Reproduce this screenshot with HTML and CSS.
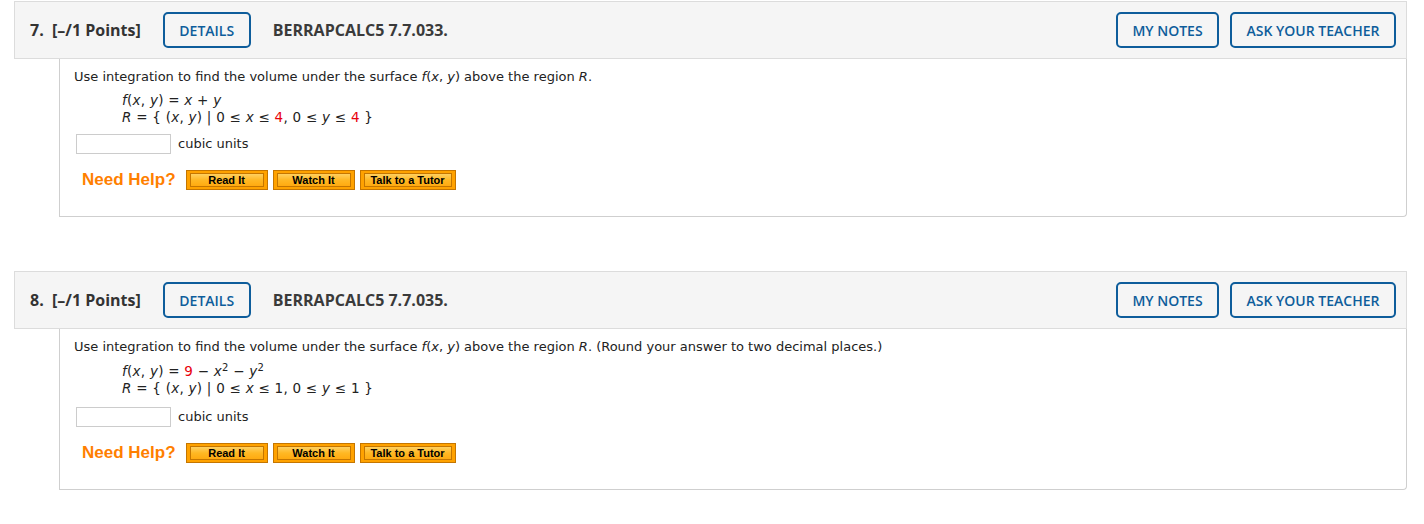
FILE: index.html
```html
<!DOCTYPE html>
<html>
<head>
<meta charset="utf-8">
<link rel="stylesheet" href="styles.css">
</head>
<body>
<div class="page">
  <div class="question">
    <div class="qhead">
      <span class="qnum">7.</span>
      <span class="qpts">[–/1 Points]</span>
      <span class="btn details">DETAILS</span>
      <span class="qid">BERRAPCALC5 7.7.033.</span>
      <span class="spacer"></span>
      <span class="btn notes">MY NOTES</span>
      <span class="btn ask">ASK YOUR TEACHER</span>
    </div>
    <div class="qbody">
      <p class="prompt">Use integration to find the volume under the surface <i>f</i>(<i>x</i>, <i>y</i>) above the region <i>R</i>.</p>
      <div class="eqs">
        <div><i>f</i>(<i>x</i>, <i>y</i>) = <i>x</i> + <i>y</i></div>
        <div><i>R</i> = { (<i>x</i>, <i>y</i>) | 0 ≤ <i>x</i> ≤ <span class="red">4</span>, 0 ≤ <i>y</i> ≤ <span class="red">4</span> }</div>
      </div>
      <div class="answer"><span class="box"></span><span>cubic units</span></div>
      <div class="help">
        <span class="needhelp">Need Help?</span>
        <span class="hbtn w82"><span>Read It</span></span>
        <span class="hbtn w82"><span>Watch It</span></span>
        <span class="hbtn w95"><span>Talk to a Tutor</span></span>
      </div>
    </div>
  </div>
  <div class="question">
    <div class="qhead">
      <span class="qnum">8.</span>
      <span class="qpts">[–/1 Points]</span>
      <span class="btn details">DETAILS</span>
      <span class="qid">BERRAPCALC5 7.7.035.</span>
      <span class="spacer"></span>
      <span class="btn notes">MY NOTES</span>
      <span class="btn ask">ASK YOUR TEACHER</span>
    </div>
    <div class="qbody sup-body">
      <p class="prompt">Use integration to find the volume under the surface <i>f</i>(<i>x</i>, <i>y</i>) above the region <i>R</i>. (Round your answer to two decimal places.)</p>
      <div class="eqs">
        <div class="supline"><i>f</i>(<i>x</i>, <i>y</i>) = <span class="red">9</span> − <i>x</i><sup>2</sup> − <i>y</i><sup>2</sup></div>
        <div><i>R</i> = { (<i>x</i>, <i>y</i>) | 0 ≤ <i>x</i> ≤ 1, 0 ≤ <i>y</i> ≤ 1 }</div>
      </div>
      <div class="answer"><span class="box"></span><span>cubic units</span></div>
      <div class="help">
        <span class="needhelp">Need Help?</span>
        <span class="hbtn w82"><span>Read It</span></span>
        <span class="hbtn w82"><span>Watch It</span></span>
        <span class="hbtn w95"><span>Talk to a Tutor</span></span>
      </div>
    </div>
  </div>
</div>
</body>
</html>
```
FILE: styles.css
```css
html, body { margin: 0; padding: 0; background: #fff; }
.page { padding: 1px 0 0 14px; width: 1393px; }
.question { margin-bottom: 54px; }
.qhead {
  display: flex; align-items: center;
  height: 56px;
  background: #f5f5f5;
  border: 1px solid #dcdcdc;
  font-family: "Open Sans", sans-serif;
  color: #333;
  padding: 0 10px 0 15px;
}
.qnum { font-weight: 700; font-size: 16px; width: 22px; }
.qpts { font-weight: 700; font-size: 16px; margin-right: 22px; }
.btn {
  box-sizing: border-box;
  height: 36px;
  display: inline-flex; align-items: center; justify-content: center;
  border: 2px solid #0e5d9b;
  border-radius: 5px;
  color: #0e5d9b;
  font-weight: 600; font-size: 14px;
  background: #f5f5f5;
}
.details { width: 88px; margin-right: 22px; }
.qid { font-weight: 700; font-size: 16px; color: #3a3a3a; }
.spacer { flex: 1; }
.notes { width: 103px; margin-right: 11px; }
.ask { width: 166px; }
.qbody {
  margin-left: 45px;
  border: 1px solid #cfcfcf;
  border-top: none;
  border-radius: 0 0 4px 0;
  padding: 10px 14px 26px 14px;
  font-family: "DejaVu Sans", Verdana, sans-serif;
  font-size: 13px;
  color: #222;
}
.prompt { margin: 0 0 7px 0; line-height: 16px; }
.eqs { margin-left: 48px; line-height: 17px; font-size: 13.5px; letter-spacing: 0.25px; }
.supline { line-height: 18px; }
.eqs sup { font-size: 10px; line-height: 0; vertical-align: 5px; }
.red { color: #e8000b; }
.answer { display: flex; align-items: center; margin-top: 8px; margin-left: 2px; line-height: 16px; }
.sup-body .answer { margin-top: 10px; }
.box { width: 95px; height: 20px; box-sizing: border-box; border: 1px solid #ccc; margin-right: 7px; }
.help { display: flex; align-items: center; margin-top: 16px; margin-left: 8px; height: 20px; }
.needhelp { font-family: "Liberation Sans", Arial, sans-serif; font-weight: 700; font-size: 17px; color: #ff7f00; margin-right: 10px; }
.hbtn {
  box-sizing: border-box; height: 20px;
  border: 1px solid #c57600;
  background: #ffa200;
  padding: 2px 3px;
  margin-right: 5px;
  display: inline-flex;
}
.hbtn span {
  flex: 1;
  display: flex; align-items: center; justify-content: center;
  border: 1px solid #c57600;
  background: linear-gradient(#ffd060, #ffb824 50%, #ffaa10);
  font-family: "Liberation Sans", Arial, sans-serif; font-weight: 700; font-size: 11px; color: #000;
}
.w82 { width: 82px; }
.w95 { width: 96px; }
```
